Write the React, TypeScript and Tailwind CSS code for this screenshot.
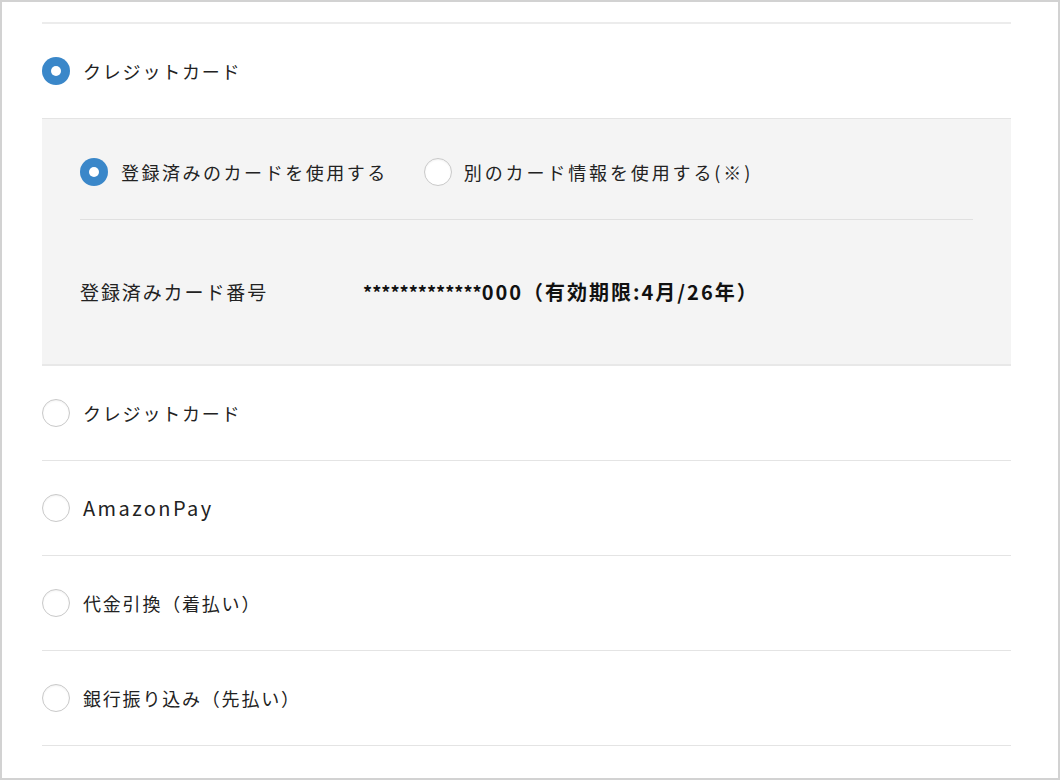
import React from "react";

const font = { fontFamily: '"Noto Sans CJK JP", "Noto Sans", sans-serif' };

function Radio({ checked }: { checked?: boolean }) {
  return checked ? (
    <span className="flex h-[28px] w-[28px] shrink-0 items-center justify-center rounded-full bg-[#3a87c9]">
      <span className="h-[10px] w-[10px] rounded-full bg-white" />
    </span>
  ) : (
    <span className="h-[28px] w-[28px] shrink-0 rounded-full border-[1.5px] border-[#c9c9c9] bg-white shadow-[inset_0_1px_2px_rgba(0,0,0,0.06)]" />
  );
}

function Row({ label, checked, latin }: { label: string; checked?: boolean; latin?: boolean }) {
  return (
    <div className="flex h-[95px] items-center gap-[13px] border-b border-[#e4e4e4]">
      <Radio checked={checked} />
      <span
        className={
          latin
            ? "text-[20px] tracking-[0.12em] text-[#222]"
            : "text-[18px] tracking-[0.1em] text-[#222]"
        }
      >
        {label}
      </span>
    </div>
  );
}

export default function App() {
  return (
    <div className="h-[780px] w-[1060px] border-2 border-[#d2d2d2] bg-white" style={font}>
      <div className="mx-[40px] mt-[20px] w-[969px] border-t-2 border-[#ececec]">
        <Row label="クレジットカード" checked />

        <div className="border-b-2 border-[#e8e8e8] bg-[#f4f4f4] px-[38px]">
          <div className="flex h-[101px] items-center border-b border-[#e0e0e0] pt-[6px]">
            <div className="flex items-center gap-[13px]">
              <Radio checked />
              <span className="text-[18px] tracking-[0.14em] text-[#222]">登録済みのカードを使用する</span>
            </div>
            <div className="ml-[36px] flex items-center gap-[12px]">
              <Radio />
              <span className="text-[18px] tracking-[0.16em] text-[#222]">別のカード情報を使用する(※)</span>
            </div>
          </div>
          <div className="flex h-[144px] items-center">
            <span className="w-[283px] text-[19px] tracking-[0.1em] text-[#222]">登録済みカード番号</span>
            <span className="text-[20px] font-bold tracking-[0.1em] text-[#111]">
              <span className="text-[18px] tracking-normal">*************</span>000（有効期限:4月/26年）
            </span>
          </div>
        </div>

        <Row label="クレジットカード" />
        <Row label="AmazonPay" latin />
        <Row label="代金引換（着払い）" />
        <Row label="銀行振り込み（先払い）" />
      </div>
    </div>
  );
}
